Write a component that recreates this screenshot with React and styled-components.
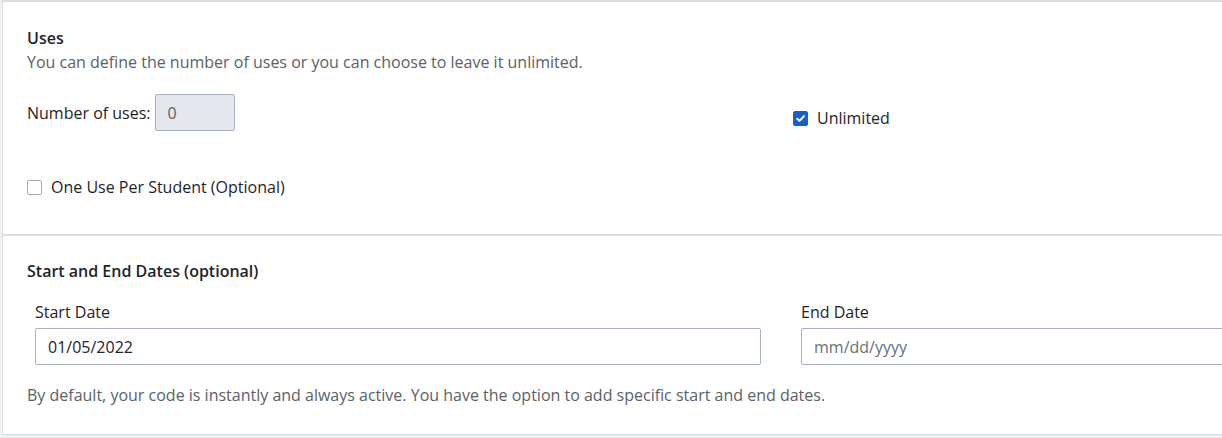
import React from 'react'
import styled, { createGlobalStyle } from 'styled-components'

const GlobalStyle = createGlobalStyle`
  html, body {
    margin: 0;
    padding: 0;
    background: #edf0f4;
    overflow: hidden;
  }
  body {
    font-family: "Open Sans", "Liberation Sans", sans-serif;
    font-size: 16px;
    color: #1f2329;
  }
`

const Page = styled.div`
  padding-left: 2px;
  width: 1700px;
`

const Card = styled.div`
  background: #fff;
  border-left: 1px solid #dcdfe3;
  border-top: 2px solid #dedede;
  border-bottom: 1px solid #d9dde2;
`

const Section = styled.section`
  padding: ${p => p.pad};
  border-top: ${p => (p.divided ? '2px solid #dedede' : 'none')};
`

const Title = styled.h3`
  margin: 0;
  font-size: 16px;
  line-height: 24px;
  font-weight: 600;
  color: #1f2329;
`

const Hint = styled.p`
  margin: ${p => p.gap || 0}px 0 0;
  font-size: 16px;
  line-height: 24px;
  color: #5c6166;
`

const Columns = styled.div`
  display: grid;
  grid-template-columns: 766px 766px;
  align-items: ${p => p.align || 'start'};
  margin-top: ${p => p.gap}px;
`

const Inline = styled.label`
  display: flex;
  align-items: center;
  gap: 4px;
  line-height: 24px;
`

const Field = styled.div`
  display: flex;
  flex-direction: column;
  gap: 4px;
  padding: 0 32px 0 8px;
`

const Label = styled.span`
  line-height: 24px;
`

const TextBox = styled.div`
  box-sizing: border-box;
  height: 37px;
  width: ${p => p.width || 'auto'};
  display: flex;
  align-items: center;
  padding-left: ${p => p.indent || 12}px;
  border: 1px solid #a8b3c3;
  border-radius: 2px;
  background: ${p => (p.disabled ? '#e4e7eb' : '#fff')};
  color: ${p => (p.placeholder ? '#6b7075' : p.disabled ? '#5c6166' : '#1f2329')};
`

const CheckRow = styled.label`
  display: flex;
  align-items: center;
  gap: 9px;
  line-height: 24px;
  margin-top: ${p => p.gap || 0}px;
  padding-top: ${p => p.nudge || 0}px;
`

const Box = styled.span`
  box-sizing: border-box;
  width: 15px;
  height: 15px;
  border-radius: 2px;
  display: inline-flex;
  align-items: center;
  justify-content: center;
  border: 1px solid ${p => (p.checked ? '#1262c9' : '#a6abb2')};
  background: ${p => (p.checked ? '#1262c9' : '#fff')};
`

const Checkbox = ({ checked }) => (
  <Box checked={checked}>
    {checked && (
      <svg width="11" height="11" viewBox="0 0 10 10">
        <path d="M2 5.2 L4.1 7.2 L8.2 2.8" fill="none" stroke="#fff" strokeWidth="1.7" strokeLinecap="round" strokeLinejoin="round" />
      </svg>
    )}
  </Box>
)

const App = () => (
  <Page>
    <GlobalStyle />
    <Card>
      <Section pad="24px 0 35px 24px">
        <Title>Uses</Title>
        <Hint>You can define the number of uses or you can choose to leave it unlimited.</Hint>
        <Columns gap={20} align="center">
          <Inline>
            Number of uses:
            <TextBox disabled width="80px">0</TextBox>
          </Inline>
          <CheckRow nudge={11}>
            <Checkbox checked />
            Unlimited
          </CheckRow>
        </Columns>
        <CheckRow gap={44}>
          <Checkbox />
          One Use Per Student (Optional)
        </CheckRow>
      </Section>
      <Section divided pad="23px 0 27px 24px">
        <Title>Start and End Dates (optional)</Title>
        <Columns gap={17}>
          <Field>
            <Label>Start Date</Label>
            <TextBox>01/05/2022</TextBox>
          </Field>
          <Field>
            <Label>End Date</Label>
            <TextBox placeholder>mm/dd/yyyy</TextBox>
          </Field>
        </Columns>
        <Hint gap={18}>By default, your code is instantly and always active. You have the option to add specific start and end dates.</Hint>
      </Section>
    </Card>
  </Page>
)

export default App
